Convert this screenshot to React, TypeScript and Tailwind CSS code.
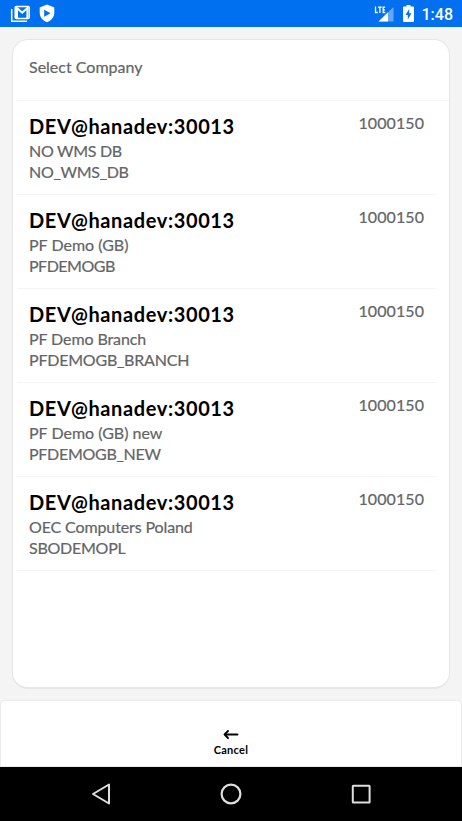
const companies = [
  { name: 'NO WMS DB', db: 'NO_WMS_DB', nameTrack: 'tracking-[-0.3px]', dbTrack: 'tracking-[-0.3px]' },
  { name: 'PF Demo (GB)', db: 'PFDEMOGB', nameTrack: 'tracking-normal', dbTrack: 'tracking-[-0.5px]' },
  { name: 'PF Demo Branch', db: 'PFDEMOGB_BRANCH', nameTrack: 'tracking-[-0.1px]', dbTrack: 'tracking-[-0.22px]' },
  { name: 'PF Demo (GB) new', db: 'PFDEMOGB_NEW', nameTrack: 'tracking-normal', dbTrack: 'tracking-[-0.28px]' },
  { name: 'OEC Computers Poland', db: 'SBODEMOPL', nameTrack: 'tracking-[-0.12px]', dbTrack: 'tracking-[-0.25px]' },
];

function StatusBar() {
  return (
    <header className="flex h-[27px] shrink-0 items-center bg-[#0170f0] pl-[10px] pr-[9px] text-white">
      <svg width="21" height="18" viewBox="0 0 21 18" fill="none" stroke="currentColor">
        <path d="M1.700 4v12.200H17" strokeWidth="1.500" />
        <rect x="5.200" y="1.400" width="14" height="12" rx="1" strokeWidth="1.500" />
        <path d="M7 13V3l5.200 4.700L17.400 3v10" strokeWidth="2" />
      </svg>
      <svg className="ml-[8px]" width="16" height="19" viewBox="0 0 16 19">
        <path fill="#fff" d="M8 .5 15.300 3.400v5.400c0 4.300-3 7.900-7.300 9.400C3.700 16.700.7 13.100.7 8.800V3.400z" />
        <path fill="#0170f0" d="M5.200 5.700v7L11.500 9.200z" />
      </svg>
      <div className="flex-1" />
      <svg width="20" height="18" viewBox="0 0 20 18">
        <path fill="#65a9f6" d="M19.500 2v14.500H4.500z" />
        <path fill="#fff" d="M14 7.300v9.200H4.500z" />
        <path fill="#0170f0" d="M0 0h12v8.700H0z" />
        <path d="M1.500 1.500v6h2.300M4 2.100h3.800M5.900 2.100v6M11.200 2.100H9.200v5.400h2.100M9.200 4.800h1.800" fill="none" stroke="#fff" strokeWidth="1.300" />
      </svg>
      <svg className="ml-[9px]" width="11" height="17" viewBox="0 0 11 17">
        <path fill="#fff" d="M3.500 0h4v1.500H10a1 1 0 0 1 1 1V16a1 1 0 0 1-1 1H1a1 1 0 0 1-1-1V2.500a1 1 0 0 1 1-1h2.500z" />
        <path fill="#0170f0" d="M6.200 4v4.300h2.300L4.800 14.500V10H2.500z" />
      </svg>
      <span className="ml-[8px] mt-[2px] font-[Roboto,sans-serif] text-[16px] font-medium leading-5">1:48</span>
    </header>
  );
}

export default function App() {
  return (
    <div className="flex h-[821px] w-[462px] flex-col bg-[#f4f4f4] font-[Lato,sans-serif]">
      <StatusBar />
      <main className="mx-[12px] mt-[12px] h-[650px] shrink-0 rounded-[16px] border border-[#e6e6e6] border-b-2 bg-white px-[4px]">
        <h1 className="-mr-[4px] h-[61px] border-b border-[#f5f5f5] pl-[12px] pt-[16px] text-[16px] leading-[21px] text-[#636466] [-webkit-text-stroke:0.2px]">
          Select Company
        </h1>
        <ul className="mr-[9px]">
          {companies.map((c) => (
            <li key={c.db} className="flex h-[94px] justify-between border-b border-[#f4f4f4] pl-[12px] pr-[12px]">
              <div className="pt-[12px] text-[16px] leading-[21px] text-[#636466]">
                <h2 className="text-[20px] font-bold leading-[27px] tracking-[0.62px] text-black">DEV@hanadev:30013</h2>
                <p className={`${c.nameTrack} [-webkit-text-stroke:0.2px]`}>{c.name}</p>
                <p className={`${c.dbTrack} [-webkit-text-stroke:0.2px]`}>{c.db}</p>
              </div>
              <span className="pt-[11px] text-[16px] leading-[21px] tracking-[0.08px] text-[#636466] [-webkit-text-stroke:0.2px]">1000150</span>
            </li>
          ))}
        </ul>
      </main>
      <footer className="mt-[11px] flex h-[67px] shrink-0 justify-center rounded-t-[4px] border border-[#ebebeb] bg-white">
        <button className="flex flex-col items-center pt-[28px] text-[11px] font-bold leading-[14px] text-black">
          <svg width="16" height="12" viewBox="0 0 16 12" fill="none" stroke="currentColor" strokeWidth="1.800" strokeLinecap="round" strokeLinejoin="round">
            <path d="M14.500 5.500H1.700M5 2 1.500 5.500 5 9" />
          </svg>
          <span className="mt-[2px] tracking-[0.3px]">Cancel</span>
        </button>
      </footer>
      <nav className="flex h-[54px] shrink-0 items-center bg-black pl-[91px] text-[#dedede]">
        <svg width="20" height="22" viewBox="0 0 20 22" fill="none" stroke="currentColor" strokeWidth="2" strokeLinejoin="round">
          <path d="M18 1.500v19L2 11z" />
        </svg>
        <svg className="ml-[109px]" width="22" height="22" viewBox="0 0 22 22" fill="none" stroke="currentColor" strokeWidth="2.200">
          <circle cx="11" cy="11" r="9.400" />
        </svg>
        <svg className="ml-[109px]" width="20" height="20" viewBox="0 0 20 20" fill="none" stroke="currentColor" strokeWidth="2">
          <rect x="1.800" y="1.800" width="16.800" height="16.800" rx="0.500" />
        </svg>
      </nav>
    </div>
  );
}
